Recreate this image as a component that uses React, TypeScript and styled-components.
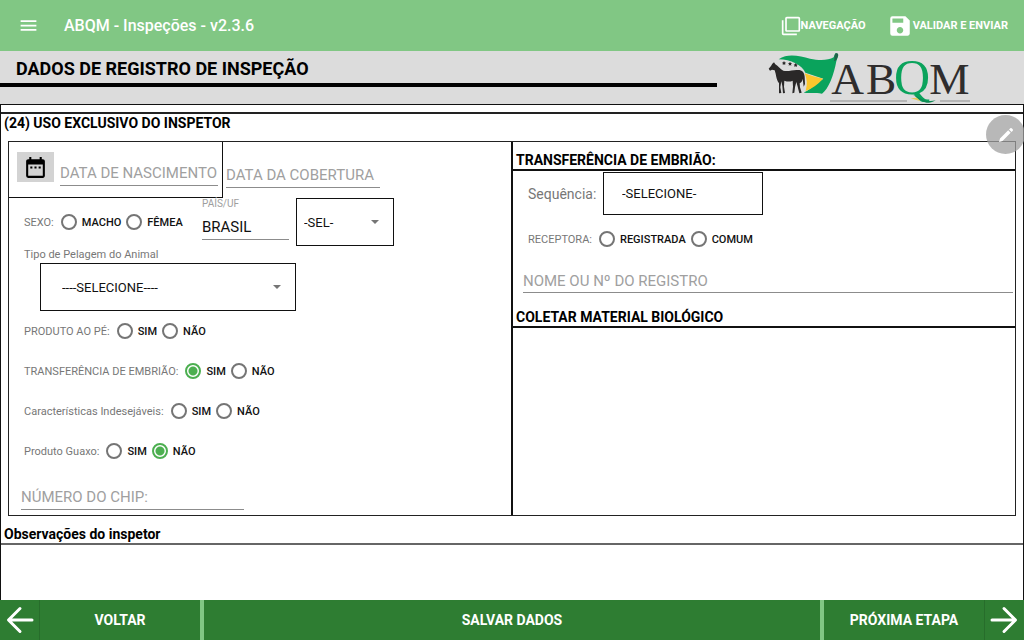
import React from "react";
import styled, { createGlobalStyle } from "styled-components";
import { MdDateRange, MdFilterNone, MdMenu, MdSave } from "react-icons/md";

const GlobalStyle = createGlobalStyle`
  *, *::before, *::after { box-sizing: border-box; }
  body {
    margin: 0;
    background: #fff;
    color: #111;
    font-family: Roboto, "Liberation Sans", sans-serif;
    font-size: 12px;
  }
  button, input, select, textarea { font-family: inherit; color: inherit; }
  h1, h2, h3 { margin: 0; }
`;

const Page = styled.div`
  display: flex;
  flex-direction: column;
  min-height: 100vh;
`;

const AppBar = styled.header`
  display: flex;
  align-items: center;
  height: 51px;
  padding: 0 16px 0 18px;
  background: #81c784;
  color: #fff;
`;

const BarButton = styled.button`
  display: flex;
  align-items: center;
  padding: 0;
  border: 0;
  background: none;
  color: #fff;
  font-size: 11px;
  font-weight: 700;
`;

const AppTitle = styled.h1`
  flex: 1;
  padding-left: 25px;
  font-size: 16px;
  font-weight: 500;
`;

const BarActions = styled.nav`
  display: flex;
  align-items: center;
  gap: 21px;
`;

const TitleBand = styled.div`
  display: flex;
  height: 53px;
  background: #dcdcdc;
`;

const BandTitle = styled.h2`
  width: 70%;
  height: 36px;
  padding-left: 16px;
  border-bottom: 4px solid #000;
  color: #000;
  font-size: 18px;
  line-height: 35px;
  font-weight: 700;
`;

const LogoSlot = styled.div`
  flex: 1;
  display: flex;
  align-items: flex-end;
  justify-content: center;
`;

const LogoDrawing = styled.svg`
  overflow: visible;
`;

const Frame = styled.main`
  position: relative;
  flex: 1;
  display: flex;
  flex-direction: column;
  border: 1px solid #111;
  border-bottom: 0;
  padding-top: 7px;
`;

const FrameTitle = styled.h2`
  height: 29px;
  padding-left: 3px;
  border-top: 2px solid #222;
  color: #000;
  font-size: 14px;
  line-height: 18px;
  font-weight: 700;
`;

const Columns = styled.div`
  display: grid;
  grid-template-columns: 502fr 504fr;
  margin: 0 7px;
  border: 1px solid #222;
`;

const Column = styled.section<{ $divided?: boolean }>`
  min-width: 0;
  border-left: ${(p) => (p.$divided ? "2px solid #111" : "0")};
`;

const SectionTitle = styled.h3`
  height: 29px;
  padding-left: 3px;
  border-bottom: 2px solid #111;
  color: #000;
  font-size: 14px;
  line-height: 36px;
  font-weight: 700;
`;

const Row = styled.div<{ $height: number; $indent?: number; $align?: string }>`
  display: flex;
  align-items: ${(p) => p.$align ?? "center"};
  min-height: ${(p) => p.$height}px;
  padding-left: ${(p) => p.$indent ?? 15}px;
`;

const DateBox = styled.div`
  display: flex;
  align-items: center;
  gap: 6px;
  width: 214px;
  height: 56px;
  padding: 0 4px 0 8px;
  border: solid #111;
  border-width: 0 1px 1px 0;
`;

const DateButton = styled.button`
  display: flex;
  align-items: center;
  justify-content: center;
  width: 37px;
  height: 30px;
  margin-bottom: 5px;
  padding: 0;
  border: 0;
  background: #d3d3d3;
  color: #000;
`;

const TextField = styled.input<{ $width?: string; $height?: number }>`
  width: ${(p) => p.$width ?? "154px"};
  min-width: 0;
  height: ${(p) => p.$height ?? 26}px;
  padding: 0;
  border: 0;
  border-bottom: 1px solid #8c8c8c;
  border-radius: 0;
  background: none;
  font-size: 15px;
  outline: none;
  &::placeholder { color: #a0a0a0; opacity: 1; }
`;

const DateField = styled(TextField)`
  margin-top: 7px;
`;

const CoverField = styled(TextField)`
  margin: 20px 0 0 3px;
`;

const ChipField = styled(TextField)`
  margin: 0 0 5px 12px;
`;

const RegistryField = styled(TextField)`
  display: block;
  margin: 7px 0 6px 10px;
`;

const SexSlot = styled.div`
  width: 178px;
`;

const Country = styled.label`
  display: flex;
  flex-direction: column;
  gap: 5px;
  width: 94px;
  margin-bottom: 6px;
  color: #9e9e9e;
  font-size: 10px;
  line-height: 11px;
`;

const CountryField = styled(TextField)`
  color: #111;
`;

const Group = styled.fieldset`
  display: flex;
  align-items: center;
  gap: 5px;
  margin: 0;
  padding: 0;
  border: 0;
  font-size: 11px;
  white-space: nowrap;
`;

const Caption = styled.span`
  margin-right: 2px;
  color: #777;
`;

const Option = styled.label`
  display: flex;
  align-items: center;
  gap: 5px;
  font-weight: 500;
`;

const Radio = styled.input`
  appearance: none;
  width: 16px;
  height: 16px;
  margin: 0;
  border: 2px solid #757575;
  border-radius: 50%;
  &:checked {
    border-color: #4caf50;
    background: radial-gradient(circle, #4caf50 4px, transparent 5px);
  }
`;

const PickerBox = styled.div<{ $width: number; $height?: number }>`
  position: relative;
  width: ${(p) => p.$width}px;
  height: ${(p) => p.$height ?? 48}px;
`;

const Picker = styled.select<{ $pad: number }>`
  appearance: none;
  width: 100%;
  height: 100%;
  padding: 0 0 0 ${(p) => p.$pad}px;
  border: 1px solid #111;
  border-radius: 0;
  background: #fff;
  font-size: 13px;
`;

const Caret = styled.span`
  position: absolute;
  top: 50%;
  right: 15px;
  margin-top: -2px;
  border: solid transparent;
  border-width: 4px 4px 0;
  border-top-color: #757575;
  pointer-events: none;
`;

const CoatLabel = styled.label`
  display: block;
  height: 17px;
  padding-left: 15px;
  color: #777;
  font-size: 11px;
  line-height: 17px;
`;

const SequenceLabel = styled.label`
  width: 75px;
  color: #777;
  font-size: 14px;
`;

const Notes = styled.label`
  flex: 1;
  display: flex;
  flex-direction: column;
  padding-top: 9px;
  color: #000;
  font-size: 14px;
  line-height: 18px;
  font-weight: 700;
`;

const NotesTitle = styled.span`
  padding-left: 3px;
`;

const NotesField = styled.textarea`
  flex: 1;
  width: 100%;
  min-height: 56px;
  padding: 4px;
  border: 0;
  border-top: 2px solid #666;
  background: none;
  resize: none;
  outline: none;
`;

const EditClip = styled.div`
  position: absolute;
  top: 10px;
  right: -1px;
  width: 38px;
  overflow: hidden;
`;

const EditBadge = styled.button`
  display: flex;
  align-items: center;
  justify-content: center;
  width: 39px;
  height: 39px;
  padding: 0;
  border: 0;
  border-radius: 50%;
  background: rgba(160, 160, 160, 0.75);
`;

const Footer = styled.footer`
  display: grid;
  grid-template-columns: 200fr 616fr 200fr;
  gap: 4px;
  height: 40px;
  background: #81c784;
`;

const FooterButton = styled.button`
  display: flex;
  align-items: center;
  padding: 0;
  border: 0;
  background: #2e7d32;
  color: #fff;
  font-size: 14px;
  font-weight: 700;
`;

const FooterText = styled.span`
  flex: 1;
`;

const ArrowCell = styled.span<{ $side: "left" | "right" }>`
  display: flex;
  border-${(p) => (p.$side === "left" ? "right" : "left")}: 1px solid #276d2b;
`;

function Arrow({ back }: { back?: boolean }) {
  return (
    <svg width="39" height="40" viewBox="0 0 39 40" fill="none" stroke="#fff" strokeWidth="3" strokeLinecap="round" strokeLinejoin="round" aria-hidden="true">
      <path d={back ? "M32 20H9M20 8.500L8.500 20L20 31.500" : "M7 20H30M19 8.500L30.500 20L19 31.500"} />
    </svg>
  );
}

function Logo() {
  return (
    <LogoDrawing width="204" height="51" viewBox="24 15 612 153" role="img" aria-label="ABQM">
      <path fill="#0aa35c" d="M56 34C85 14 120 25 150 32C180 39 205 37 221 28L225 17C230 14 236 18 234 25L229 40C222 80 205 125 186 137C165 133 150 136 131 134L144 127L190 92L136 74C128 52 92 34 56 34Z" />
      <path fill="#20624a" d="M222 40C225 34 221 24 226 17C231 13 238 18 233 27C231 34 227 39 222 40Z" />
      <path fill="#fbc62d" d="M134 76Q158 86 189 92Q166 118 137 129Q145 100 134 76Z" />
      <path fill="#2a2828" d="M26 62L33 54L37 47L42 43L46 49C55 54 60 64 70 68C85 72 100 64 114 66C127 66 133 74 134 86L135 108L131 116L128 92C127 98 125 103 119 106L120 118L125 134L118 136L113 116L109 102L105 118L103 134L97 136L99 116L98 98C90 102 82 101 73 98L72 116L75 135L69 136L67 114L64 100L61 118L64 135L57 136L57 106C51 98 49 88 47 77L44 67L36 65L30 68Z" />
      <g fill="#2a2828">
        <path d="M72 39l2 4 4 1-3 3 1 4-4-2-4 2 1-4-3-3 4-1z" />
        <path d="M90 41l2 4 4 1-3 3 1 4-4-2-4 2 1-4-3-3 4-1z" />
        <path d="M107 45l2 4 4 1-3 3 1 4-4-2-4 2 1-4-3-3 4-1z" />
      </g>
      <g fontFamily="'Liberation Serif', serif" fontSize="136" fill="#2f2d2d">
        <text x="214" y="137">A</text>
        <text x="318" y="137">B</text>
        <text x="402" y="137" fontSize="150" fill="#0aa35c">Q</text>
        <text x="508" y="137">M</text>
      </g>
      <path fill="#e8c95a" d="M452 151L470 149L482 160Z" />
      <path fill="#0f8a55" d="M459 140C485 151 496 164 527 157C502 174 484 158 459 140Z" />
      <path stroke="#8f8f8f" strokeWidth="3" d="M210 159H441M540 159H630" />
    </LogoDrawing>
  );
}

interface ChoiceProps {
  name: string;
  caption: string;
  options: string[];
  selected?: string;
}

function Choice({ name, caption, options, selected }: ChoiceProps) {
  return (
    <Group aria-label={caption}>
      <Caption>{caption}</Caption>
      {options.map((option) => (
        <Option key={option}>
          <Radio type="radio" name={name} value={option} defaultChecked={option === selected} />
          {option}
        </Option>
      ))}
    </Group>
  );
}

const yesNoQuestions = [
  { name: "produto-ao-pe", caption: "PRODUTO AO PÉ:" },
  { name: "transferencia", caption: "TRANSFERÊNCIA DE EMBRIÃO:", selected: "SIM" },
  { name: "caracteristicas", caption: "Características Indesejáveis:" },
  { name: "guaxo", caption: "Produto Guaxo:", selected: "NÃO" },
];

export default function App() {
  return (
    <Page>
      <GlobalStyle />
      <AppBar>
        <BarButton type="button" aria-label="Menu">
          <MdMenu size={21} />
        </BarButton>
        <AppTitle>ABQM - Inspeções - v2.3.6</AppTitle>
        <BarActions>
          <BarButton type="button">
            <MdFilterNone size={20} />
            NAVEGAÇÃO
          </BarButton>
          <BarButton type="button">
            <MdSave size={26} />
            VALIDAR E ENVIAR
          </BarButton>
        </BarActions>
      </AppBar>
      <TitleBand>
        <BandTitle>DADOS DE REGISTRO DE INSPEÇÃO</BandTitle>
        <LogoSlot>
          <Logo />
        </LogoSlot>
      </TitleBand>
      <Frame>
        <FrameTitle>(24) USO EXCLUSIVO DO INSPETOR</FrameTitle>
        <Columns>
          <Column>
            <Row $height={56} $indent={0} $align="flex-start">
              <DateBox>
                <DateButton type="button" aria-label="Escolher data">
                  <MdDateRange size={25} />
                </DateButton>
                <DateField $width="158px" aria-label="Data de nascimento" placeholder="DATA DE NASCIMENTO" />
              </DateBox>
              <CoverField aria-label="Data da cobertura" placeholder="DATA DA COBERTURA" />
            </Row>
            <Row $height={48}>
              <SexSlot>
                <Choice name="sexo" caption="SEXO:" options={["MACHO", "FÊMEA"]} />
              </SexSlot>
              <Country>
                PAÍS/UF
                <CountryField $width="87px" defaultValue="BRASIL" />
              </Country>
              <PickerBox $width={98}>
                <Picker $pad={7} aria-label="UF">
                  <option>-SEL-</option>
                </Picker>
                <Caret />
              </PickerBox>
            </Row>
            <CoatLabel htmlFor="pelagem">Tipo de Pelagem do Animal</CoatLabel>
            <Row $height={48} $indent={31}>
              <PickerBox $width={256}>
                <Picker $pad={21} id="pelagem">
                  <option>----SELECIONE----</option>
                </Picker>
                <Caret />
              </PickerBox>
            </Row>
            {yesNoQuestions.map((question) => (
              <Row key={question.name} $height={40}>
                <Choice {...question} options={["SIM", "NÃO"]} />
              </Row>
            ))}
            <Row $height={44} $indent={0} $align="flex-end">
              <ChipField $width="223px" aria-label="Número do chip" placeholder="NÚMERO DO CHIP:" />
            </Row>
          </Column>
          <Column $divided>
            <SectionTitle>TRANSFERÊNCIA DE EMBRIÃO:</SectionTitle>
            <Row $height={45}>
              <SequenceLabel htmlFor="sequencia">Sequência:</SequenceLabel>
              <PickerBox $width={160} $height={43}>
                <Picker $pad={18} id="sequencia">
                  <option>-SELECIONE-</option>
                </Picker>
              </PickerBox>
            </Row>
            <Row $height={46}>
              <Choice name="receptora" caption="RECEPTORA:" options={["REGISTRADA", "COMUM"]} />
            </Row>
            <RegistryField $width="calc(100% - 12px)" $height={24} aria-label="Nome ou nº do registro" placeholder="NOME OU Nº DO REGISTRO" />
            <SectionTitle>COLETAR MATERIAL BIOLÓGICO</SectionTitle>
          </Column>
        </Columns>
        <Notes>
          <NotesTitle>Observações do inspetor</NotesTitle>
          <NotesField />
        </Notes>
        <EditClip>
          <EditBadge type="button" aria-label="Editar">
            <svg width="16" height="16" viewBox="0 0 16 16" fill="#fff" aria-hidden="true">
              <path d="M1 15L2 11.500L10.200 3.300L12.700 5.800L4.500 14ZM11 2.500L12.300 1.200Q13 .7 13.700 1.300L14.700 2.300Q15.300 3 14.800 3.700L13.500 5Z" />
            </svg>
          </EditBadge>
        </EditClip>
      </Frame>
      <Footer>
        <FooterButton type="button">
          <ArrowCell $side="left">
            <Arrow back />
          </ArrowCell>
          <FooterText>VOLTAR</FooterText>
        </FooterButton>
        <FooterButton type="button">
          <FooterText>SALVAR DADOS</FooterText>
        </FooterButton>
        <FooterButton type="button">
          <FooterText>PRÓXIMA ETAPA</FooterText>
          <ArrowCell $side="right">
            <Arrow />
          </ArrowCell>
        </FooterButton>
      </Footer>
    </Page>
  );
}
